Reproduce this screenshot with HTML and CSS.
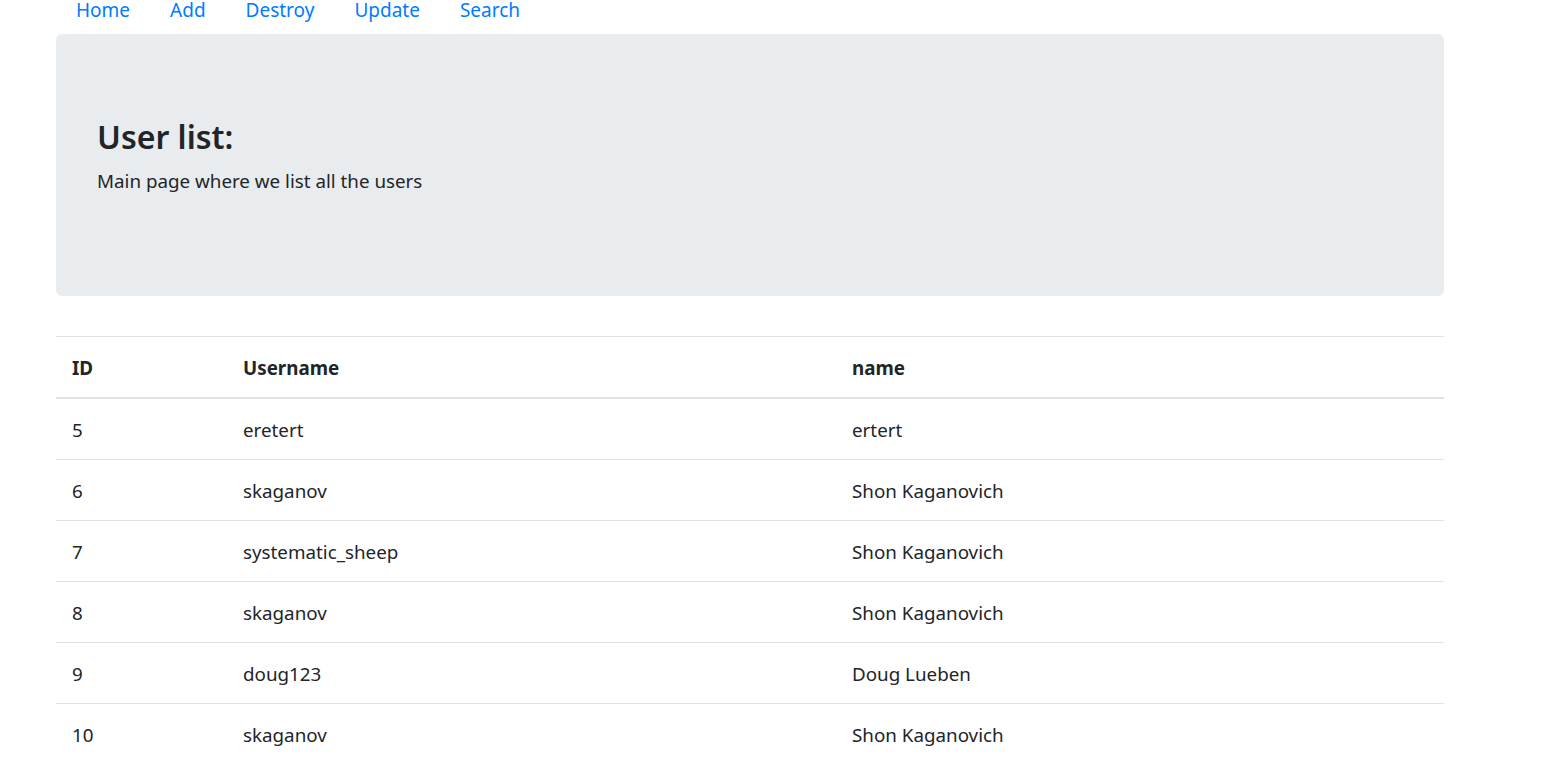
FILE: index.html
```html
<!DOCTYPE html>
<html lang="en">
<head>
<meta charset="utf-8">
<title>User list</title>
<link rel="stylesheet" href="styles.css">
</head>
<body>
<div class="container">
  <nav class="nav">
    <a class="nav-link" href="#">Home</a>
    <a class="nav-link" href="#">Add</a>
    <a class="nav-link" href="#">Destroy</a>
    <a class="nav-link" href="#">Update</a>
    <a class="nav-link" href="#">Search</a>
  </nav>
  <div class="jumbotron">
    <h3 class="title">User list:</h3>
    <p class="lead">Main page where we list all the users</p>
  </div>
  <table class="table">
    <thead>
      <tr><th class="c-id">ID</th><th class="c-user">Username</th><th>name</th></tr>
    </thead>
    <tbody>
      <tr><td>5</td><td>eretert</td><td>ertert</td></tr>
      <tr><td>6</td><td>skaganov</td><td>Shon Kaganovich</td></tr>
      <tr><td>7</td><td>systematic_sheep</td><td>Shon Kaganovich</td></tr>
      <tr><td>8</td><td>skaganov</td><td>Shon Kaganovich</td></tr>
      <tr><td>9</td><td>doug123</td><td>Doug Lueben</td></tr>
      <tr><td>10</td><td>skaganov</td><td>Shon Kaganovich</td></tr>
    </tbody>
  </table>
</div>
</body>
</html>
```
FILE: styles.css
```css
html, body {
  margin: 0;
  padding: 0;
  background: #fff;
}
body {
  font-family: "Noto Sans", "Open Sans", "Liberation Sans", sans-serif;
  font-size: 18.8px;
  line-height: 30px;
  color: #212529;
  overflow: hidden;
}
.container {
  width: 1388px;
  margin-left: 56px;
  margin-top: -15px;
}
.nav {
  display: flex;
  font-size: 19px;
}
.nav-link {
  display: block;
  padding: 10px 20px 9px;
  color: #007bff;
  text-decoration: none;
}
.jumbotron {
  background: #e9ecef;
  border-radius: 6px;
  padding: 80px 40px 81px 41px;
  margin-bottom: 40px;
}
.title {
  margin: 2px 0 8px;
  font-size: 32px;
  line-height: 42px;
  font-weight: 600;
}
.lead {
  margin: 1px 0 19px;
}
.table {
  width: 100%;
  border-collapse: collapse;
}
.table th, .table td {
  text-align: left;
  padding: 16px 15px 14px 16px;
  border-top: 1px solid #dee2e6;
  vertical-align: top;
}
.table th {
  font-weight: 700;
  border-bottom: 2px solid #dee2e6;
}
.c-id { width: 140px; }
.c-user { width: 578px; }
```
